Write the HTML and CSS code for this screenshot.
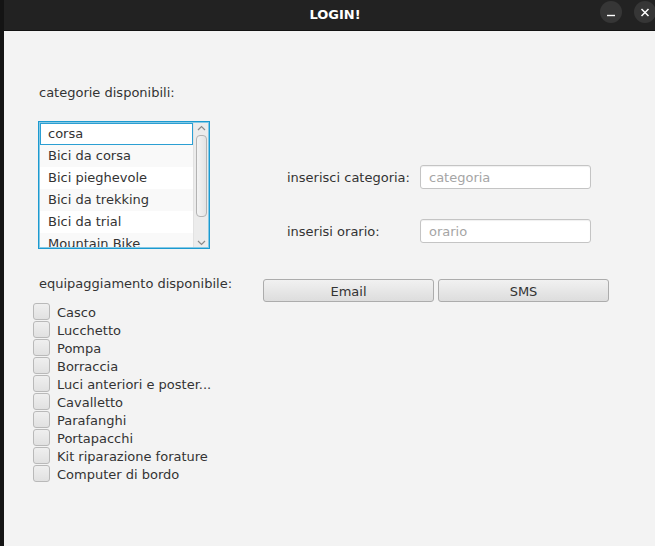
FILE: index.html
```html
<!DOCTYPE html>
<html lang="it">
<head>
<meta charset="utf-8">
<title>LOGIN!</title>
<link rel="stylesheet" href="styles.css">
</head>
<body>
<div class="window">
  <header class="titlebar">
    <span class="title">LOGIN!</span>
    <div class="controls">
      <span class="ctl">
        <svg width="22" height="22" viewBox="0 0 22 22"><line x1="7" y1="14.5" x2="15" y2="14.5" stroke="#fff" stroke-width="1.4"/></svg>
      </span>
      <span class="ctl">
        <svg width="22" height="22" viewBox="0 0 22 22"><path d="M7.5 8 L14.5 15 M14.5 8 L7.5 15" stroke="#fff" stroke-width="1.5" fill="none"/></svg>
      </span>
    </div>
  </header>
  <main class="content">
    <section class="top">
      <div class="cat">
        <span class="lbl">categorie disponibili:</span>
        <div class="listbox">
          <ul class="cells">
            <li class="cell focused">corsa</li>
            <li class="cell odd">Bici da corsa</li>
            <li class="cell">Bici pieghevole</li>
            <li class="cell odd">Bici da trekking</li>
            <li class="cell">Bici da trial</li>
            <li class="cell odd">Mountain Bike</li>
          </ul>
          <div class="vscroll">
            <svg class="arrow" width="13" height="9" viewBox="0 0 13 9"><path d="M3 6 L6.5 2.5 L10 6" stroke="#8a8a8a" stroke-width="1.2" fill="none"/></svg>
            <div class="thumb"></div>
            <svg class="arrow" width="13" height="9" viewBox="0 0 13 9"><path d="M3 3 L6.5 6.5 L10 3" stroke="#8a8a8a" stroke-width="1.2" fill="none"/></svg>
          </div>
        </div>
      </div>
      <div class="form">
        <div class="frow"><span class="flbl">inserisci categoria:</span><input class="field" type="text" placeholder="categoria"></div>
        <div class="frow"><span class="flbl">inserisi orario:</span><input class="field" type="text" placeholder="orario"></div>
      </div>
    </section>
    <section class="mid">
      <span class="lbl equip">equipaggiamento disponibile:</span>
      <div class="buttons">
        <button class="btn" type="button">Email</button>
        <button class="btn" type="button">SMS</button>
      </div>
    </section>
    <ul class="checks">
      <li class="check"><span class="box"></span>Casco</li>
      <li class="check"><span class="box"></span>Lucchetto</li>
      <li class="check"><span class="box"></span>Pompa</li>
      <li class="check"><span class="box"></span>Borraccia</li>
      <li class="check"><span class="box"></span>Luci anteriori e poster...</li>
      <li class="check"><span class="box"></span>Cavalletto</li>
      <li class="check"><span class="box"></span>Parafanghi</li>
      <li class="check"><span class="box"></span>Portapacchi</li>
      <li class="check"><span class="box"></span>Kit riparazione forature</li>
      <li class="check"><span class="box"></span>Computer di bordo</li>
    </ul>
  </main>
</div>
</body>
</html>
```

FILE: styles.css
```css
* { box-sizing: border-box; }
html, body { margin: 0; padding: 0; }
body {
  background: #141414;
  font-family: "DejaVu Sans", sans-serif;
  font-size: 13px;
  color: #333;
}
.window {
  width: 655px;
  height: 546px;
  border-left: 4px solid #141414;
  display: flex;
  flex-direction: column;
  overflow: hidden;
}
.titlebar {
  height: 31px;
  flex: none;
  background: #222;
  border-bottom: 1px solid #121212;
  display: flex;
  align-items: flex-start;
}
.title {
  flex: 1;
  text-align: center;
  padding-left: 66px;
  color: #fff;
  font-weight: bold;
  font-size: 13px;
  line-height: 30px;
}
.controls {
  display: flex;
  gap: 12px;
  margin-top: 1px;
  margin-right: -1px;
}
.ctl {
  width: 22px;
  height: 22px;
  border-radius: 50%;
  background: #363636;
  display: block;
}
.ctl svg { display: block; }

.content {
  flex: 1;
  background: #f3f3f3;
  padding: 54px 0 0 35px;
}
.lbl { line-height: 16px; display: block; }
.top { display: flex; }
.cat { width: 171px; display: flex; flex-direction: column; }
.listbox {
  margin: 20px 0 0 -1px;
  width: 172px;
  height: 128px;
  border: 1px solid #1b9ad0;
  box-shadow: inset 0 0 0 1px #86c9e5;
  padding: 1px;
  display: flex;
  background: #fff;
}
.cells {
  list-style: none;
  margin: 0;
  padding: 0;
  flex: 1;
  overflow: hidden;
}
.cell {
  height: 22px;
  line-height: 22px;
  padding-left: 8px;
  background: #fff;
  white-space: nowrap;
}
.cell.odd { background: #f9f9f9; }
.cell.focused { box-shadow: inset 0 0 0 1px #2b9fd3; }
.vscroll {
  width: 15px;
  background: #ececec;
  border-left: 1px solid #e2e2e2;
  display: flex;
  flex-direction: column;
  align-items: center;
}
.arrow { display: block; flex: none; margin-top: 1px; }
.thumb {
  width: 11px;
  height: 82px;
  margin-top: 2px;
  margin-left: 1px;
  border: 1px solid #b3b3b3;
  border-radius: 4px;
  background: linear-gradient(to right, #f4f4f4, #e4e4e4);
}
.vscroll .arrow:last-child { margin-top: auto; margin-bottom: 0; }

.form {
  margin-left: 77px;
  padding-top: 80px;
  display: flex;
  flex-direction: column;
  gap: 30px;
}
.frow { display: flex; align-items: center; height: 24px; }
.flbl { width: 133px; }
.field {
  width: 171px;
  height: 24px;
  border: 1px solid #c4c4c4;
  border-radius: 3px;
  padding: 0 8px;
  font: inherit;
  color: #333;
  background: #fff;
  box-shadow: inset 0 1px 1px #f0f0f0;
  outline: none;
}
.field::placeholder { color: #a5a5a5; }

.mid { display: flex; margin-top: 27px; }
.equip { width: 224px; }
.buttons { display: flex; gap: 4px; margin-top: 3px; }
.btn {
  width: 171px;
  height: 23px;
  border: 1px solid #acacac;
  border-radius: 3px;
  background: linear-gradient(#f1f1f1, #dddddd);
  font: inherit;
  color: #333;
  padding: 2px 0 0 0;
}

.checks {
  list-style: none;
  margin: 1px 0 0 -6px;
  padding: 0;
}
.check {
  height: 18px;
  display: flex;
  align-items: flex-start;
  line-height: 19px;
}
.box {
  width: 17px;
  height: 17px;
  margin-right: 7px;
  border: 1px solid #b9b9b9;
  border-radius: 3px;
  background: linear-gradient(#efefef, #e1e1e1);
  flex: none;
}
```
